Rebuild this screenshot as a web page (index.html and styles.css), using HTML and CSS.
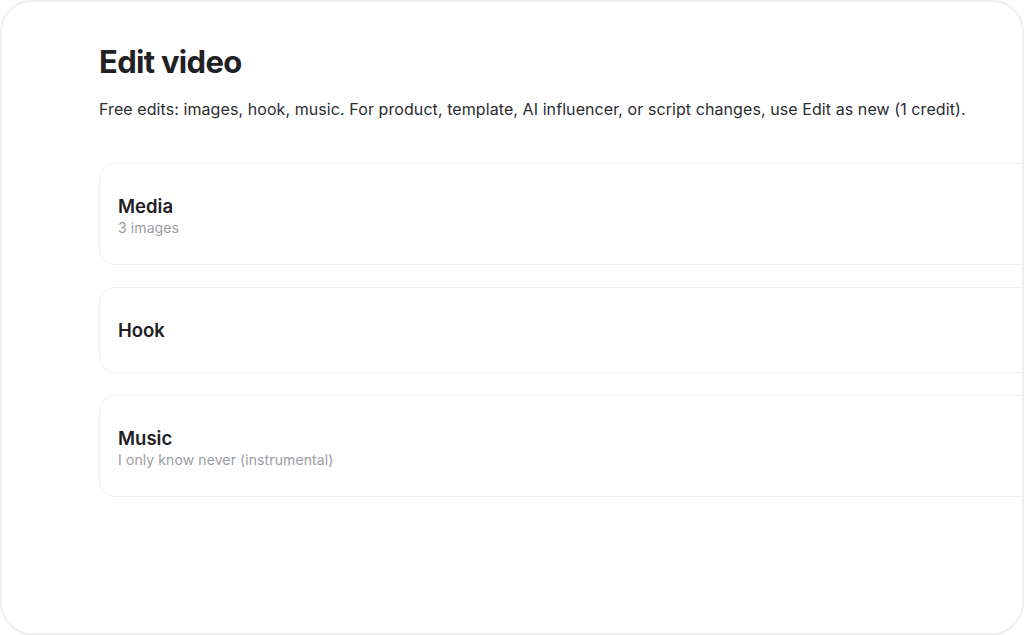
FILE: index.html
```html
<!DOCTYPE html>
<html lang="en">
<head>
    <meta charset="UTF-8">
    <meta name="viewport" content="width=device-width, initial-scale=1.0">
    <title>Edit video</title>
    <link rel="stylesheet" href="styles.css">
</head>
<body>
    <div class="frame">
        <div class="content">
            <h1 class="title">Edit video</h1>
            <p class="intro">Free edits: images, hook, music. For product, template, AI influencer, or script changes, use Edit as new (1 credit).</p>

            <div class="sections">
                <div class="section">
                    <div class="section-name">Media</div>
                    <div class="section-meta">3 images</div>
                </div>
                <div class="section">
                    <div class="section-name">Hook</div>
                </div>
                <div class="section">
                    <div class="section-name">Music</div>
                    <div class="section-meta">I only know never (instrumental)</div>
                </div>
            </div>
        </div>
    </div>
</body>
</html>
```

FILE: styles.css
```css
:root {
    --text-color: #1f2125;
    --muted-color: #9a9ca2;
    --line-color: #efefef;
}

html, body {
    margin: 0;
    background: #ffffff;
}

body {
    font-family: Inter, "Noto Sans", sans-serif;
    color: var(--text-color);
}

.frame {
    box-sizing: border-box;
    width: 1024px;
    height: 635px;
    border: 2px solid var(--line-color);
    border-radius: 32px;
    overflow: hidden;
}

.content {
    width: 1000px;
    padding: 40px 0 0 97px;
}

.title {
    margin: 0;
    font-size: 31px;
    font-weight: 700;
    letter-spacing: -0.7px;
    line-height: 40px;
}

.intro {
    margin: 16px 0 0;
    font-size: 16px;
    line-height: 22px;
    letter-spacing: 0.08px;
    color: #2b2d31;
}

.sections {
    display: flex;
    flex-direction: column;
    gap: 22px;
    margin-top: 43px;
}

.section {
    border: 1px solid var(--line-color);
    border-radius: 16px;
    padding: 28px 18px;
}

.section-name {
    font-size: 18.5px;
    font-weight: 600;
    line-height: 28px;
}

.section-meta {
    font-size: 14px;
    line-height: 16px;
    letter-spacing: 0.1px;
    color: var(--muted-color);
}
```
